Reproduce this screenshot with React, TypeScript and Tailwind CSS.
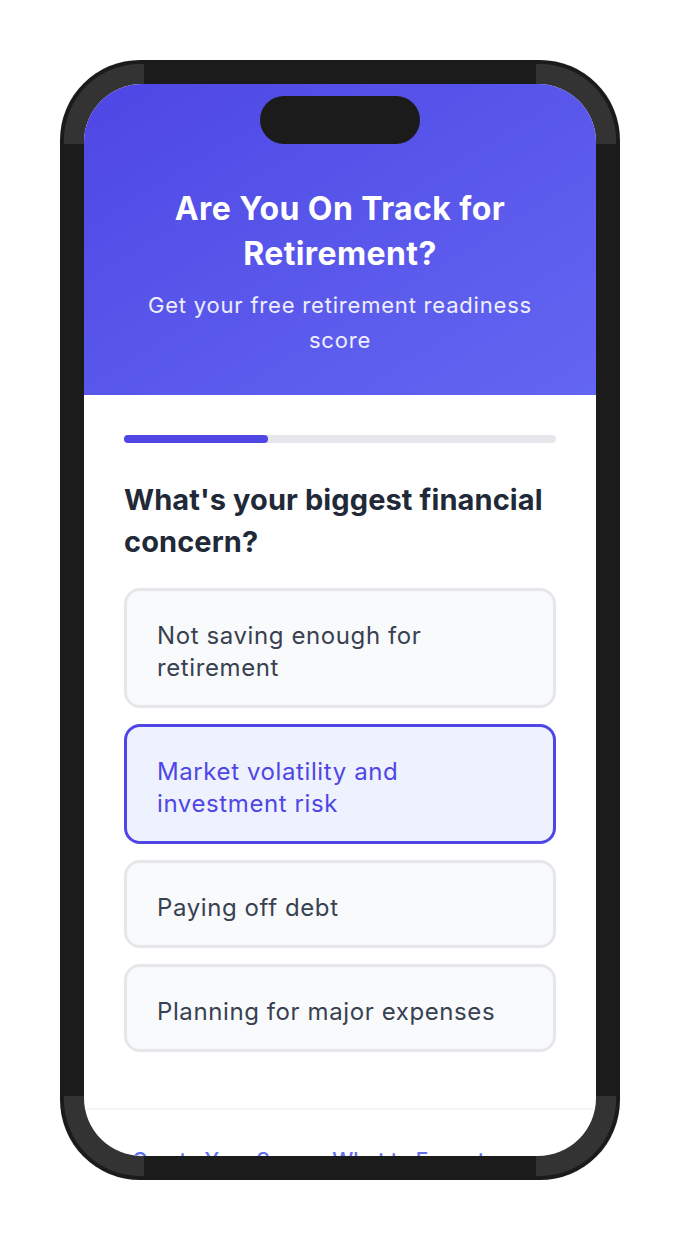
import React, { useState } from 'react';

const options = [
  'Not saving enough for retirement',
  'Market volatility and investment risk',
  'Paying off debt',
  'Planning for major expenses',
];

const App: React.FC = () => {
  const [selected, setSelected] = useState(1);

  return (
    <div className="w-[680px] h-[1240px] bg-white flex items-center justify-center font-['Inter',sans-serif]">
      <div className="relative w-[560px] h-[1120px] rounded-[80px] bg-[#1b1b1b] p-[24px]">
        {/* frame corner highlights */}
        <div className="absolute top-[4px] left-[4px] w-[80px] h-[80px] bg-[#333333] rounded-tl-[76px]" />
        <div className="absolute top-[4px] right-[4px] w-[80px] h-[80px] bg-[#333333] rounded-tr-[76px]" />
        <div className="absolute bottom-[4px] left-[4px] w-[80px] h-[80px] bg-[#333333] rounded-bl-[76px]" />
        <div className="absolute bottom-[4px] right-[4px] w-[80px] h-[80px] bg-[#333333] rounded-br-[76px]" />

        <div className="relative z-10 w-full h-full rounded-[58px] bg-white overflow-hidden flex flex-col">
          <div className="absolute top-[12px] left-1/2 -translate-x-1/2 w-[160px] h-[48px] rounded-full bg-[#1b1b1b]" />

          <div className="bg-gradient-to-br from-[#4f46e5] to-[#6366f1] pt-[102px] pb-[37px] px-[40px] text-center">
            <h1 className="text-[32px] leading-[45px] font-bold text-white tracking-[0.4px]">
              Are You On Track for Retirement?
            </h1>
            <p className="mt-[12px] text-[22px] leading-[35px] text-white/90 tracking-[0.8px] px-[8px]">
              Get your free retirement readiness score
            </p>
          </div>

          <div className="px-[40px] pt-[40px] pb-[56px]">
            <div className="h-[8px] rounded-full bg-[#e5e7eb]">
              <div className="h-full w-1/3 rounded-full bg-[#4f46e5]" />
            </div>

            <h2 className="mt-[36px] text-[29px] leading-[42px] font-bold text-[#1f2937] tracking-[0.1px]">
              What's your biggest financial concern?
            </h2>

            <div className="mt-[25px] flex flex-col gap-[16px]">
              {options.map((opt, i) => (
                <button
                  key={opt}
                  onClick={() => setSelected(i)}
                  className={
                    i === selected
                      ? 'w-full text-left rounded-[16px] border-[3px] border-[#4f46e5] bg-[#eef2ff] pl-[30px] pr-[40px] pt-[29px] pb-[21px] text-[24px] leading-[32px] tracking-[0.6px] text-[#4f46e5]'
                      : 'w-full text-left rounded-[16px] border-[3px] border-[#e5e7eb] bg-[#f9fafb] pl-[30px] pr-[40px] pt-[29px] pb-[21px] text-[24px] leading-[32px] tracking-[0.6px] text-[#374151]'
                  }
                >
                  {opt}
                </button>
              ))}
            </div>
          </div>

          <div className="border-t-2 border-[#f3f4f6] pt-[37px] px-[48px] text-[21px] leading-[28px] text-[#6170ee] font-medium whitespace-nowrap">
            Create Your Score · What to Expect
          </div>
        </div>
      </div>
    </div>
  );
};

export default App;
